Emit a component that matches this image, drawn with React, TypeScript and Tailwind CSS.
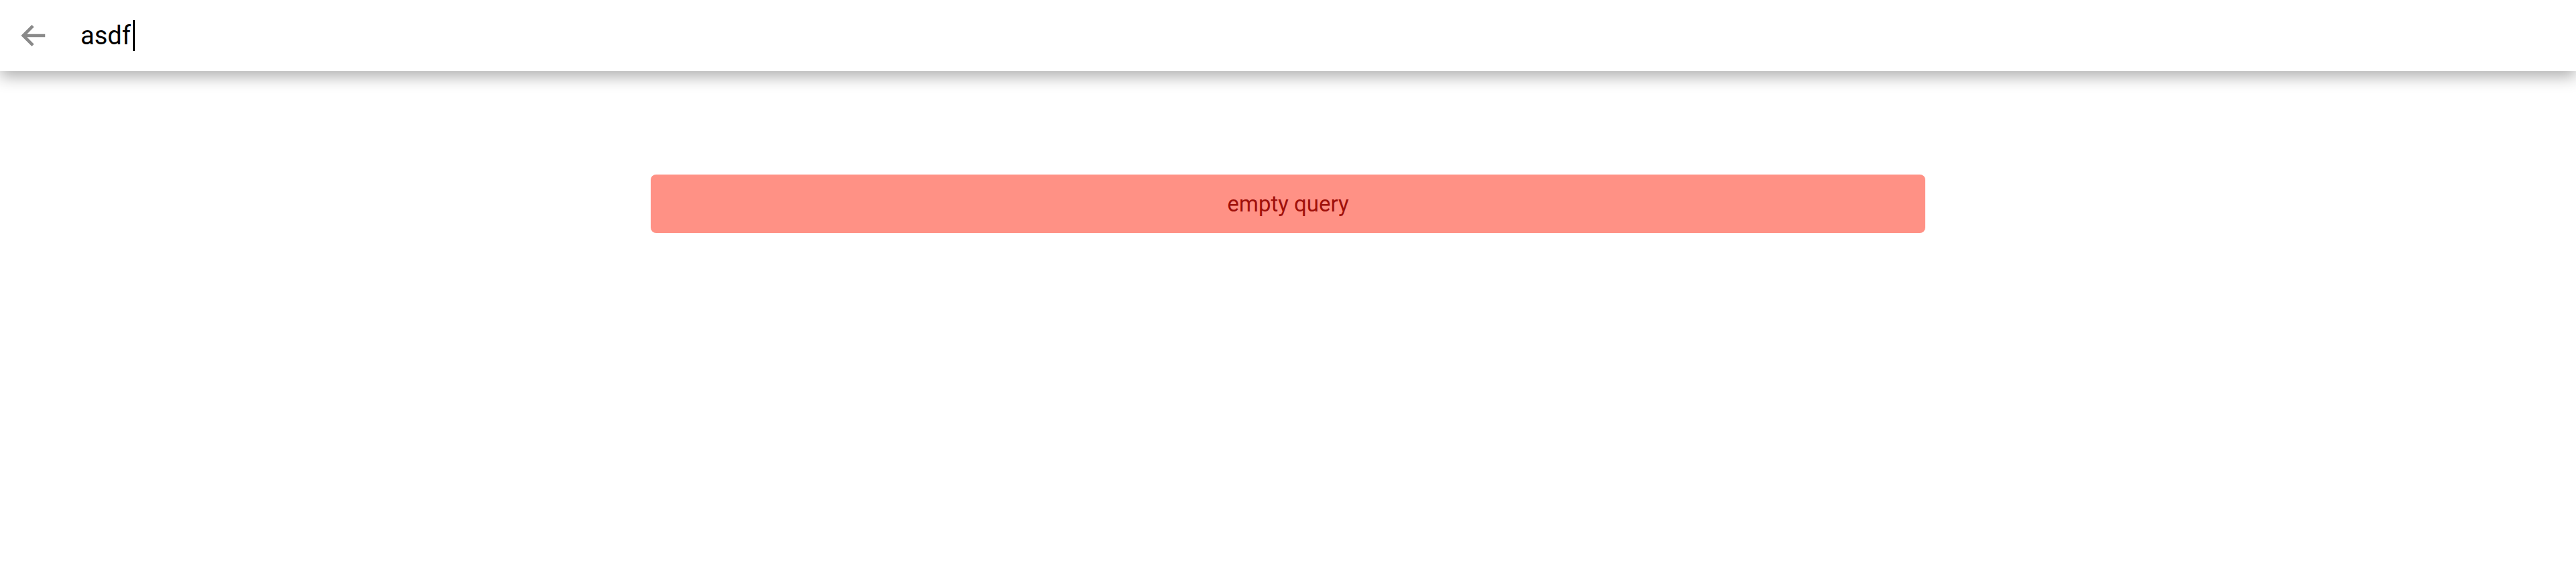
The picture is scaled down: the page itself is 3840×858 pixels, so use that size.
export default function App() {
  return (
    <div className="min-h-screen w-full bg-white" style={{ fontFamily: 'Roboto, "Liberation Sans", sans-serif' }}>
      {/* Search header */}
      <header className="relative z-10 flex h-[106px] items-center bg-white shadow-[0_8px_22px_rgba(0,0,0,0.32)]">
        <button className="ml-[26px] flex h-[48px] w-[48px] items-center justify-center text-[#8a8a8a]">
          <svg width="46" height="46" viewBox="0 0 24 24" fill="none" stroke="currentColor" strokeWidth="2.4" strokeLinecap="butt">
            <path d="M21 12H4.5" />
            <path d="M11.5 4.5L4 12l7.5 7.5" />
          </svg>
        </button>
        <div className="ml-[46px] flex items-center text-[38px] text-black">
          <span className="leading-none">asdf</span>
          <span className="ml-[3px] h-[46px] w-[3px] bg-black" />
        </div>
      </header>

      {/* Results */}
      <main className="flex justify-center pt-[154px]">
        <div className="flex h-[87px] w-[1900px] items-center justify-center rounded-[8px] bg-[#ff9185] text-[33px] text-[#a0100a]">
          empty query
        </div>
      </main>
    </div>
  );
}
